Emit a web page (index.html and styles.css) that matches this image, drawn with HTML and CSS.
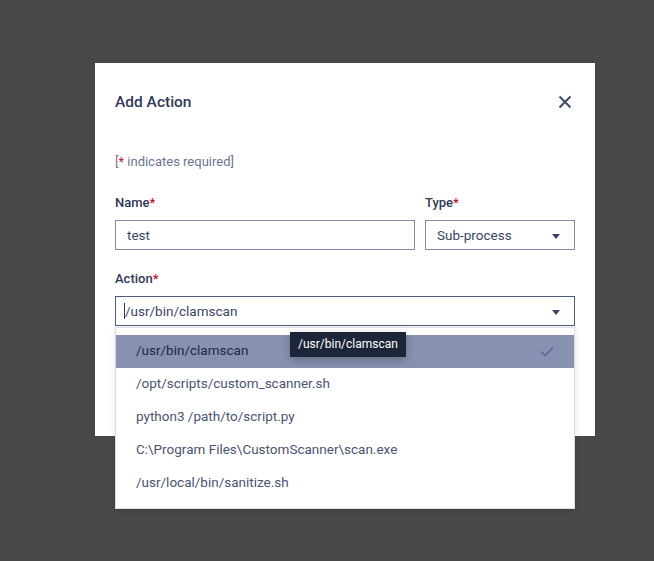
FILE: index.html
```html
<!DOCTYPE html>
<html>
<head>
<meta charset="utf-8">
<link rel="stylesheet" href="styles.css">
</head>
<body>
<div class="overlay">
  <div class="modal">
    <div class="modal-header">
      <h2 class="title">Add Action</h2>
      <button class="close" aria-label="Close">
        <svg width="14" height="14" viewBox="0 0 14 14"><path d="M1.5 1.5L12.5 12.5M12.5 1.5L1.5 12.5" stroke="#3d4a6b" stroke-width="2" fill="none"/></svg>
      </button>
    </div>
    <p class="required-note">[<span class="star">*</span> indicates required]</p>
    <div class="row">
      <div class="field grow">
        <label class="label">Name<span class="star">*</span></label>
        <div class="input">test</div>
      </div>
      <div class="field type">
        <label class="label">Type<span class="star">*</span></label>
        <div class="input select">Sub-process<span class="caret"></span></div>
      </div>
    </div>
    <div class="field action">
      <label class="label">Action<span class="star">*</span></label>
      <div class="input select focused"><span class="cursor"></span>/usr/bin/clamscan<span class="caret"></span></div>
      <ul class="menu">
        <li class="item selected">/usr/bin/clamscan
          <svg class="check" width="14" height="11" viewBox="0 0 14 11"><path d="M1 5.5L5 9.5L13 1.5" stroke="#5c6788" stroke-width="1.5" fill="none"/></svg>
        </li>
        <li class="item">/opt/scripts/custom_scanner.sh</li>
        <li class="item">python3 /path/to/script.py</li>
        <li class="item">C:\Program Files\CustomScanner\scan.exe</li>
        <li class="item">/usr/local/bin/sanitize.sh</li>
      </ul>
      <div class="tooltip">/usr/bin/clamscan</div>
    </div>
  </div>
</div>
</body>
</html>
```
FILE: styles.css
```css
* { box-sizing: border-box; }
html, body { margin: 0; padding: 0; }
body {
  width: 654px;
  height: 561px;
  background: #484848;
  font-family: Roboto, "Liberation Sans", sans-serif;
  color: #2f3a56;
  overflow: hidden;
}
.overlay {
  padding: 63px 0 0 95px;
}
.modal {
  width: 500px;
  height: 373px;
  background: #ffffff;
  padding: 0 20px;
}
.modal-header {
  display: flex;
  justify-content: space-between;
  align-items: center;
  height: 78px;
}
.title {
  margin: 0;
  font-size: 15.5px;
  font-weight: 500;
  color: #2f3a56;
}
.close {
  border: 0;
  background: none;
  padding: 0;
  margin-right: 3px;
  width: 14px;
  height: 14px;
  display: flex;
}
.required-note {
  margin: 13px 0 0;
  font-size: 13px;
  line-height: 16px;
  color: #6b7591;
}
.star { color: #c8102e; }
.row {
  display: flex;
  gap: 10px;
  margin-top: 25px;
}
.field { display: flex; flex-direction: column; }
.grow { flex: 1; }
.type { width: 150px; }
.label {
  font-size: 13px;
  font-weight: 500;
  line-height: 16px;
  color: #2f3a56;
  margin-bottom: 9px;
}
.input {
  height: 30px;
  border: 1px solid #7f8bab;
  display: flex;
  align-items: center;
  padding: 0 11px 1px;
  font-size: 13.5px;
  color: #3a4563;
  position: relative;
}
.select { padding-right: 30px; }
.caret {
  position: absolute;
  right: 14px;
  top: 13px;
  width: 0;
  height: 0;
  border-left: 4.5px solid transparent;
  border-right: 4.5px solid transparent;
  border-top: 5px solid #3a4563;
}
.action {
  margin-top: 21px;
  position: relative;
}
.focused {
  border-color: #4d5b86;
  padding-left: 8px;
}
.cursor {
  display: inline-block;
  width: 1px;
  height: 16px;
  background: #2f3a56;
}
.menu {
  position: absolute;
  left: 0;
  right: 0;
  top: 56px;
  margin: 0;
  padding: 7px 0 8px;
  list-style: none;
  background: #ffffff;
  border: 1px solid #d9dce4;
  box-shadow: 0 2px 6px rgba(0,0,0,0.12);
  z-index: 1;
}
.item {
  height: 33px;
  display: flex;
  align-items: center;
  justify-content: space-between;
  padding: 0 20px 3px;
  font-size: 13.5px;
  color: #4a5470;
}
.item.selected {
  background: #8891b0;
  color: #1f2940;
}
.check { margin-top: 3px; }
.tooltip {
  position: absolute;
  left: 175px;
  top: 61px;
  height: 25px;
  padding: 0 8px 1px;
  display: flex;
  align-items: center;
  background: #1c2638;
  color: #ffffff;
  font-size: 12px;
  box-shadow: 0 3px 8px rgba(0,0,0,0.25);
  z-index: 2;
}
```
